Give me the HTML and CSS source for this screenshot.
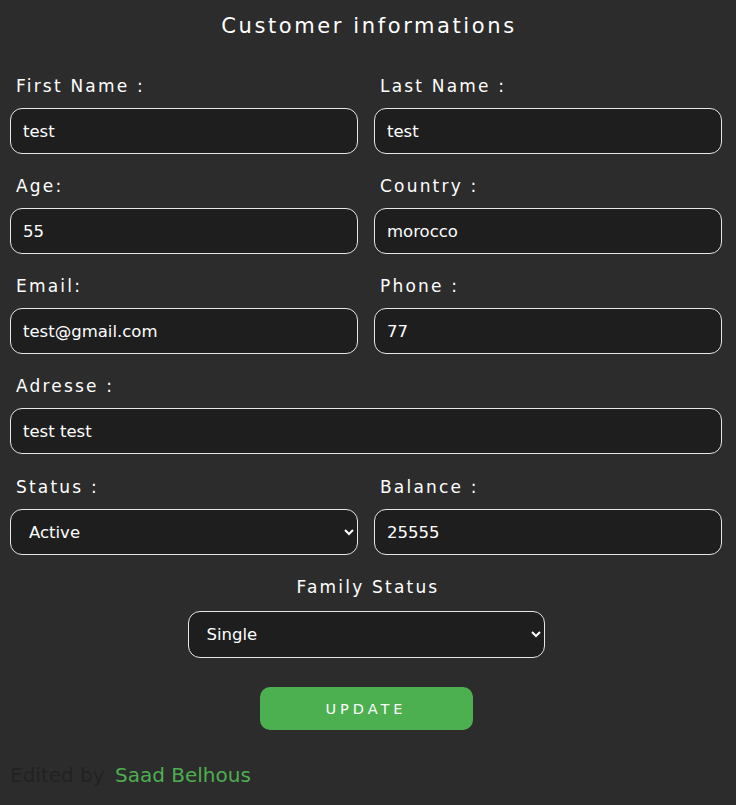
FILE: index.html
```html
<!DOCTYPE html>
<html>
<head>
<meta charset="utf-8">
<link rel="stylesheet" href="styles.css">
</head>
<body>
<div class="page">
  <h1 class="title">Customer informations</h1>
  <form class="form">
    <div class="field">
      <label class="label">First Name :</label>
      <input class="input" type="text" value="test">
    </div>
    <div class="field">
      <label class="label">Last Name :</label>
      <input class="input" type="text" value="test">
    </div>
    <div class="field">
      <label class="label">Age:</label>
      <input class="input" type="text" value="55">
    </div>
    <div class="field">
      <label class="label">Country :</label>
      <input class="input" type="text" value="morocco">
    </div>
    <div class="field">
      <label class="label">Email:</label>
      <input class="input" type="text" value="test@gmail.com">
    </div>
    <div class="field">
      <label class="label">Phone :</label>
      <input class="input" type="text" value="77">
    </div>
    <div class="field wide">
      <label class="label">Adresse :</label>
      <input class="input" type="text" value="test test">
    </div>
    <div class="field shifted">
      <label class="label">Status :</label>
      <select class="input select"><option>Active</option></select>
    </div>
    <div class="field shifted">
      <label class="label">Balance :</label>
      <input class="input" type="text" value="25555">
    </div>
    <div class="family wide">
      <label class="label center family-label">Family Status</label>
      <select class="input select family-select"><option>Single</option></select>
    </div>
    <div class="actions wide">
      <button type="button" class="btn">UPDATE</button>
    </div>
  </form>
  <p class="footer">Edited by <span class="author">Saad Belhous</span></p>
</div>
</body>
</html>
```
FILE: styles.css
```css
html, body {
  margin: 0;
  padding: 0;
  background: #2c2c2c;
}
.page {
  padding: 11px 14px 0 10px;
  font-family: "DejaVu Sans", sans-serif;
  color: #fff;
}
.title {
  margin: 0 0 33px 0;
  padding-left: 6px;
  font-size: 21px;
  font-weight: 400;
  line-height: 30px;
  letter-spacing: 2.6px;
  text-align: center;
}
.form {
  display: grid;
  grid-template-columns: 1fr 1fr;
  column-gap: 16px;
  row-gap: 20px;
}
.field {
  display: flex;
  flex-direction: column;
}
.shifted {
  margin-top: 1px;
}
.wide {
  grid-column: 1 / 3;
}
.label {
  display: block;
  font-size: 17px;
  line-height: 24px;
  letter-spacing: 2.2px;
  padding-left: 6px;
  margin-bottom: 10px;
}
.label.center {
  padding-left: 4px;
  text-align: center;
}
.family-label {
  margin-bottom: 12px;
}
.input {
  box-sizing: border-box;
  height: 46px;
  width: 100%;
  background: #1e1e1e;
  border: 1px solid #e6e6e6;
  border-radius: 12px;
  color: #fff;
  font-family: "DejaVu Sans", sans-serif;
  font-size: 16.5px;
  padding: 0 12px;
  outline: none;
}
.select {
  padding-left: 14px;
}
.family {
  display: flex;
  flex-direction: column;
  align-items: center;
}
.family-select {
  width: 357px;
  height: 47px;
  padding-left: 14px;
}
.actions {
  display: flex;
  justify-content: center;
  margin-top: 9px;
}
.btn {
  width: 213px;
  height: 43px;
  background: #4caf50;
  border: none;
  border-radius: 10px;
  color: #fff;
  font-family: "DejaVu Sans", sans-serif;
  font-size: 14.5px;
  letter-spacing: 4px;
  padding-left: 6px;
}
.footer {
  margin: 33px 0 0 0;
  font-size: 20px;
  line-height: 24px;
  color: #222222;
}
.author {
  color: #4caf50;
  margin-left: 4px;
}
```
